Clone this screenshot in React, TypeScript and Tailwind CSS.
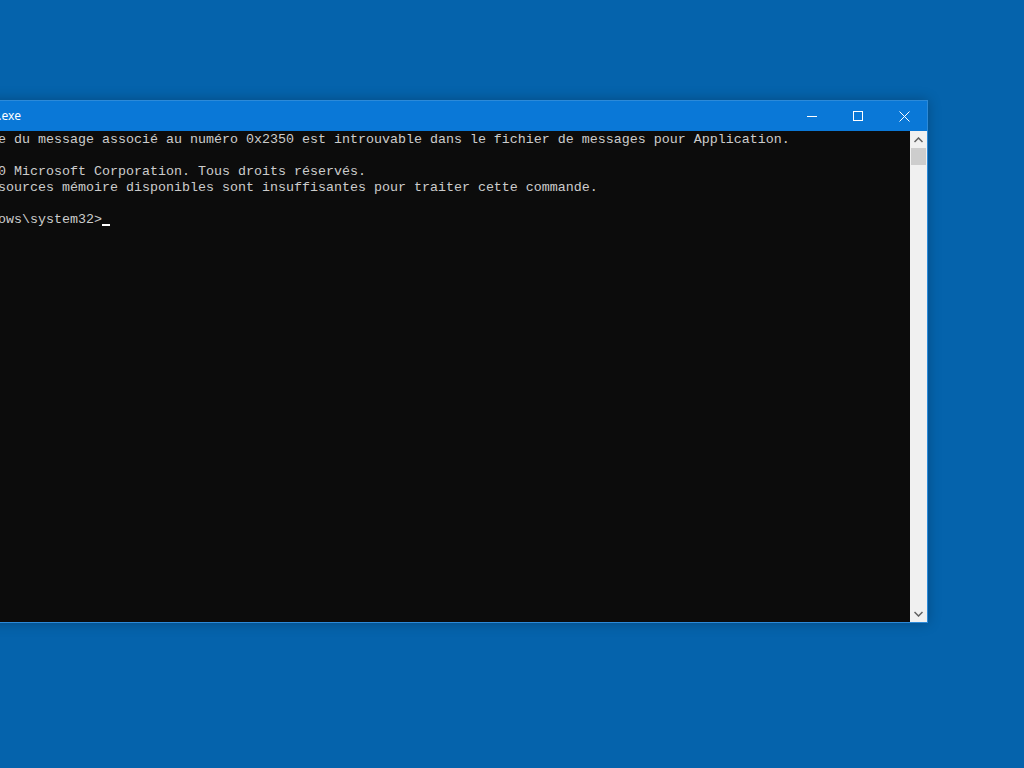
import React from "react";

const lines = [
  "Le texte du message associé au numéro 0x2350 est introuvable dans le fichier de messages pour Application.",
  "",
  "(c) 2020 Microsoft Corporation. Tous droits réservés.",
  "Les ressources mémoire disponibles sont insuffisantes pour traiter cette commande.",
  "",
];

export default function App() {
  return (
    <div className="w-[1024px] h-[768px] overflow-hidden bg-[#0563ac] pt-[100px]">
      <div className="ml-[-60px] w-[988px] h-[523px] border border-[#2c8ad9] bg-[#0c0c0c] flex flex-col shadow-[0_0_12px_rgba(0,0,0,0.25)]">
        {/* title bar */}
        <div className="h-[30px] bg-[#0a78d7] flex items-center shrink-0">
          <div className="w-[80px] flex justify-end overflow-visible">
            <span className="whitespace-nowrap text-white text-[12px] leading-none [font-family:'Noto_Sans','Liberation_Sans',sans-serif]">
              Administrateur : C:\Windows\system32\cmd.exe
            </span>
          </div>
          <div className="flex-1" />
          <div className="flex h-full">
            <div className="w-[46px] h-full flex items-center justify-center">
              <div className="w-[10px] h-[1px] bg-white" />
            </div>
            <div className="w-[46px] h-full flex items-center justify-center">
              <div className="w-[10px] h-[10px] border border-white" />
            </div>
            <div className="w-[46px] h-full flex items-center justify-center">
              <svg width="11" height="11" viewBox="0 0 11 11">
                <path d="M0.5 0.5 L10.5 10.5 M10.5 0.5 L0.5 10.5" stroke="white" strokeWidth="1" fill="none" />
              </svg>
            </div>
          </div>
        </div>
        {/* body */}
        <div className="flex flex-1 min-h-0">
          <div className="flex-1 pl-[1px] pt-[1px] text-[#cccccc] text-[13.333px] leading-[16px] [font-family:'Liberation_Mono',monospace] whitespace-pre overflow-hidden">
            {lines.map((l, i) => (
              <div key={i} className="h-[16px]">{l}</div>
            ))}
            <div className="h-[16px] flex items-start">
              <span>C:\Windows\system32&gt;</span>
              <span className="inline-block w-[8px] h-[2px] bg-white mt-[12px]" />
            </div>
          </div>
          {/* scrollbar */}
          <div className="w-[17px] bg-[#f0f0f0] flex flex-col">
            <div className="h-[17px] flex items-center justify-center">
              <svg width="9" height="6" viewBox="0 0 9 6">
                <path d="M0.5 5 L4.5 1 L8.5 5" stroke="#606060" strokeWidth="1.5" fill="none" />
              </svg>
            </div>
            <div className="mx-[1px] h-[17px] bg-[#cdcdcd]" />
            <div className="flex-1" />
            <div className="h-[17px] flex items-center justify-center">
              <svg width="9" height="6" viewBox="0 0 9 6">
                <path d="M0.5 1 L4.5 5 L8.5 1" stroke="#606060" strokeWidth="1.5" fill="none" />
              </svg>
            </div>
          </div>
        </div>
      </div>
    </div>
  );
}
